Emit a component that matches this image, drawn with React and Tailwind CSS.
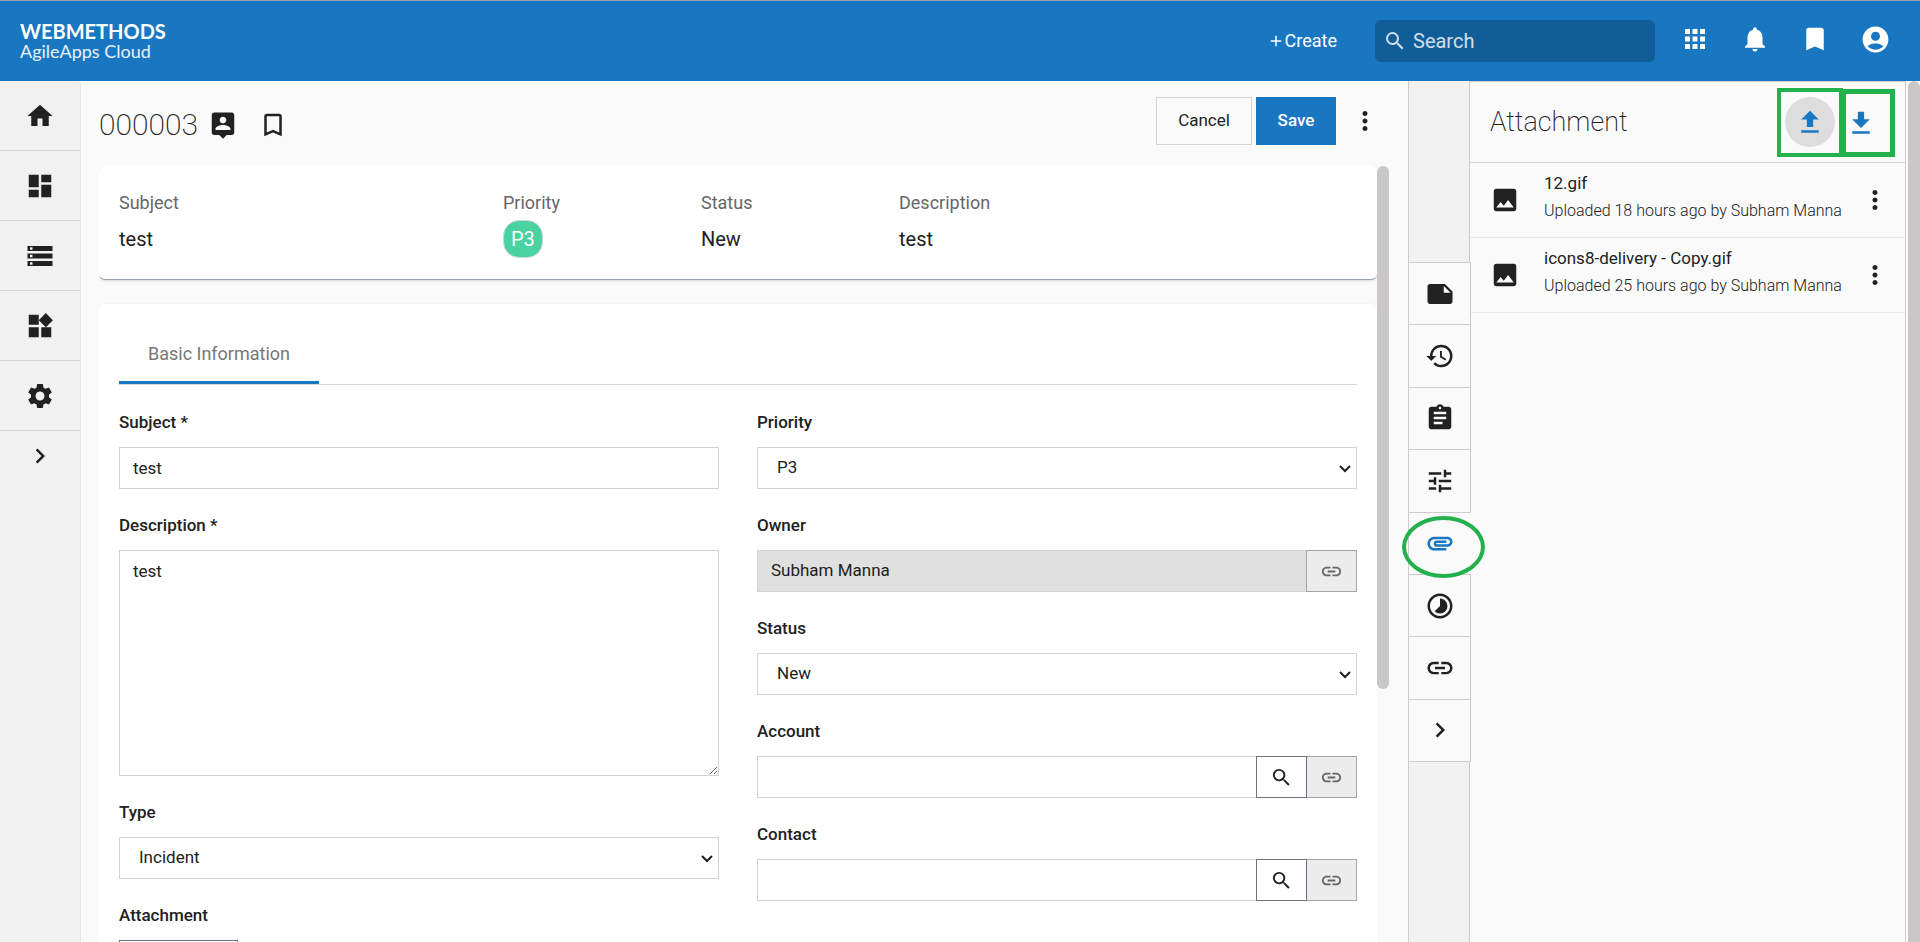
import React, { useState } from 'react'
import {
  MdAccountCircle,
  MdAdd,
  MdApps,
  MdAssignment,
  MdAttachment,
  MdBookmark,
  MdBookmarkBorder,
  MdChevronRight,
  MdDashboard,
  MdHistory,
  MdHome,
  MdImage,
  MdLink,
  MdMoreVert,
  MdNote,
  MdNotifications,
  MdSearch,
  MdSettings,
  MdStorage,
  MdTimelapse,
  MdTune,
  MdWidgets,
} from 'react-icons/md'

const leftNav = [
  { label: 'Home', Icon: MdHome },
  { label: 'Dashboard', Icon: MdDashboard },
  { label: 'Records', Icon: MdStorage },
  { label: 'Objects', Icon: MdWidgets },
  { label: 'Settings', Icon: MdSettings },
]

const panelTabs = [
  { label: 'Notes', Icon: MdNote },
  { label: 'History', Icon: MdHistory },
  { label: 'Tasks', Icon: MdAssignment },
  { label: 'Processes', Icon: MdTune },
  { label: 'Attachment', Icon: MdAttachment },
  { label: 'Time', Icon: MdTimelapse },
  { label: 'Related', Icon: MdLink },
  { label: 'Collapse', Icon: MdChevronRight },
]

const files = [
  { name: '12.gif', info: 'Uploaded 18 hours ago by Subham Manna' },
  { name: 'icons8-delivery - Copy.gif', info: 'Uploaded 25 hours ago by Subham Manna' },
]

const Header = () => {
  return (
    <header className="flex h-[81px] shrink-0 items-center border-t border-gray-400 bg-[#1976c1] pl-5 pr-[15px] text-white">
      <a href="#" className="flex flex-col font-[Lato,sans-serif]">
        <span className="text-xl leading-5 font-bold">WEBMETHODS</span>
        <span className="text-lg leading-5 text-white/90">AgileApps Cloud</span>
      </a>
      <button className="ml-auto flex items-center text-lg">
        <MdAdd className="size-[18px]" />
        Create
      </button>
      <label className="ml-[38px] flex h-[42px] w-[280px] items-center gap-1.5 rounded-md bg-[#115d98] pl-2">
        <MdSearch className="size-6 shrink-0 text-white/80" />
        <input
          aria-label="Search"
          placeholder="Search"
          className="w-full min-w-0 bg-transparent text-xl outline-none placeholder:text-white/80"
        />
      </label>
      <div className="ml-2.5 flex pb-1">
        <button aria-label="Applications" className="flex w-[60px] items-center justify-center"><MdApps className="size-[30px]" /></button>
        <button aria-label="Notifications" className="flex w-[60px] items-center justify-center"><MdNotifications className="size-[30px]" /></button>
        <button aria-label="Bookmarks" className="flex w-[60px] items-center justify-center"><MdBookmark className="size-[30px]" /></button>
        <button aria-label="Account" className="flex w-[60px] items-center justify-center"><MdAccountCircle className="size-[31px]" /></button>
      </div>
    </header>
  )
}

const Sidebar = () => {
  return (
    <nav className="w-[81px] shrink-0 rounded-tr border-r border-gray-200 bg-[#f1f1f1]">
      {leftNav.map(({ label, Icon }) => (
        <a key={label} href="#" aria-label={label} className="flex h-[70px] items-center justify-center border-b border-gray-300">
          <Icon className="size-[30px]" />
        </a>
      ))}
      <button aria-label="Expand menu" className="flex h-[50px] w-full items-center justify-center">
        <MdChevronRight className="size-[30px]" />
      </button>
    </nav>
  )
}

const Field = ({ id, label, children }) => {
  return (
    <div className="mb-[23px] flex flex-col">
      <label htmlFor={id} className="mb-3 text-[17px] leading-[26px] font-medium">{label}</label>
      {children}
    </div>
  )
}

const SelectField = ({ id, label, options }) => {
  return (
    <Field id={id} label={label}>
      <div className="relative">
        <select id={id} className="h-[42px] w-full appearance-none border border-[#ced4da] bg-white px-[19px] text-[17px]">
          {options.map((o) => <option key={o}>{o}</option>)}
        </select>
        <svg
          className="pointer-events-none absolute top-[18px] right-1.5 h-2 w-3"
          viewBox="0 0 12 8"
          fill="none"
          stroke="currentColor"
          strokeWidth="2"
        >
          <path d="M1 1l5 5 5-5" />
        </svg>
      </div>
    </Field>
  )
}

const LookupField = ({ id, label, value = '', locked = false }) => {
  return (
    <Field id={id} label={label}>
      <div className="flex h-[42px]">
        <input
          id={id}
          defaultValue={value}
          readOnly={locked}
          className={`min-w-0 flex-1 border border-r-0 border-[#ced4da] px-[13px] text-[17px] ${locked ? 'bg-[#e0e0e0]' : 'bg-white'}`}
        />
        {!locked && (
          <button type="button" aria-label={`Search ${label}`} className="flex w-[51px] items-center justify-center border border-[#6c757d]">
            <MdSearch className="size-[23px]" />
          </button>
        )}
        <button
          type="button"
          aria-label={`Open ${label}`}
          className={`flex items-center justify-center border border-[#a0a5aa] bg-[#ececec] text-[#666] ${locked ? 'w-[51px]' : 'w-[50px] border-l-0'}`}
        >
          <MdLink className="size-[23px]" />
        </button>
      </div>
    </Field>
  )
}

const SummaryItem = ({ label, children }) => {
  return (
    <div>
      <div className="text-lg leading-[26px] text-[#666]">{label}</div>
      <div className="mt-2 flex h-[30px] items-center text-xl">{children}</div>
    </div>
  )
}

const Record = () => {
  return (
    <main className="flex min-w-0 flex-1 flex-col pl-[18px]">
      <div className="mb-[5px] flex h-20 shrink-0 items-center pr-7">
        <div className="mt-2 flex items-center">
          <h1 className="text-[30px] leading-9 font-extralight">000003</h1>
          <button aria-label="Owner" className="ml-2.5">
            <svg className="size-[30px]" viewBox="0 0 24 24" fill="currentColor">
              <path d="M19 2H5c-1.11 0-2 .9-2 2v14c0 1.1.89 2 2 2h4l3 3 3-3h4c1.1 0 2-.9 2-2V4c0-1.1-.9-2-2-2zm-7 3.3c1.49 0 2.7 1.21 2.7 2.7 0 1.49-1.21 2.7-2.7 2.7-1.49 0-2.7-1.21-2.7-2.7 0-1.49 1.21-2.7 2.7-2.7zM18 16H6v-.9c0-2 4-3.1 6-3.1s6 1.1 6 3.1v.9z" />
            </svg>
          </button>
          <button aria-label="Bookmark" className="ml-5"><MdBookmarkBorder className="size-[30px]" /></button>
        </div>
        <button className="ml-auto h-12 w-24 border border-gray-300 text-[17px]">Cancel</button>
        <button className="ml-1 h-12 w-20 bg-[#1976c1] text-[17px] font-medium text-white">Save</button>
        <button aria-label="More actions" className="ml-3.5"><MdMoreVert className="size-[30px]" /></button>
      </div>

      <div className="flex min-h-0 flex-1 pr-[19px]">
        <div className="min-w-0 flex-1 overflow-hidden">
          <section className="grid h-[114px] grid-cols-[384fr_198fr_198fr_458fr] rounded-md border-b border-gray-400 bg-white px-5 pt-6 shadow-sm">
            <SummaryItem label="Subject">test</SummaryItem>
            <SummaryItem label="Priority">
              <span className="h-[38px] rounded-2xl border border-gray-300 bg-[#4ad2a0] px-[7px] leading-9 text-white">P3</span>
            </SummaryItem>
            <SummaryItem label="Status">New</SummaryItem>
            <SummaryItem label="Description">test</SummaryItem>
          </section>

          <section className="mt-[23px] rounded-md border-t border-gray-100 bg-white px-5 pt-5">
            <div className="flex border-b border-gray-300">
              <button className="h-[60px] w-[200px] border-b-3 border-[#1976c1] pt-0.5 text-lg text-[#777]">Basic Information</button>
            </div>
            <form className="mt-6 grid grid-cols-2 gap-x-[38px]">
              <div>
                <Field id="subject" label="Subject *">
                  <input id="subject" defaultValue="test" className="h-[42px] border border-[#ced4da] px-[13px] text-[17px]" />
                </Field>
                <Field id="description" label="Description *">
                  <textarea id="description" defaultValue="test" className="h-[226px] resize border border-[#ced4da] px-[13px] py-2 text-[17px]" />
                </Field>
                <SelectField id="type" label="Type" options={['Incident', 'Problem', 'Question']} />
                <Field id="attachment" label="Attachment">
                  <button id="attachment" type="button" className="h-[42px] w-[119px] border border-[#6c757d]" />
                </Field>
              </div>
              <div>
                <SelectField id="priority" label="Priority" options={['P3', 'P2', 'P1']} />
                <LookupField id="owner" label="Owner" value="Subham Manna" locked />
                <SelectField id="status" label="Status" options={['New', 'Open', 'Closed']} />
                <LookupField id="account" label="Account" />
                <LookupField id="contact" label="Contact" />
              </div>
            </form>
          </section>
        </div>
        {/* Scrollbar thumb */}
        <div className="h-[523px] w-3 rounded-full bg-[#c9c7c8]" />
      </div>
    </main>
  )
}

const PanelTabs = ({ active, onSelect }) => {
  return (
    <div className="z-10 -mr-px flex w-[63px] shrink-0 flex-col">
      <div className="mr-px h-[181px] border-x border-[#ccc] bg-[#f1f1f1]" />
      <div className="flex h-[500px] flex-col border-t border-[#ccc]">
        {panelTabs.map(({ label, Icon }) => (
          <button
            key={label}
            aria-label={label}
            onClick={() => onSelect(label)}
            className={`relative flex w-full flex-1 items-center justify-center border-b border-l border-[#ccc] bg-[#fafafa] ${
              label === active ? 'z-10 text-[#1976c1]' : 'border-r'
            }`}
          >
            <Icon className="size-[30px]" />
            {label === active && (
              <span className="absolute top-[3px] -left-[7px] h-[62px] w-[83px] rounded-[50%] border-4 border-[#22b14c]" />
            )}
          </button>
        ))}
      </div>
      <div className="mr-px flex-1 border-x border-[#ccc] bg-[#f1f1f1]" />
    </div>
  )
}

const AttachmentPanel = () => {
  return (
    <aside className="flex w-[450px] shrink-0">
      <div className="flex-1 border-t border-r border-[#ccc]">
        <div className="flex h-[81px] items-center justify-between border-b border-gray-300 pl-5 pr-2.5">
          <h2 className="text-[27px] font-extralight">Attachment</h2>
          <div className="flex items-end">
            <button aria-label="Upload" className="flex h-[69px] w-[66px] items-center justify-center border-4 border-[#22b14c] text-[#1976c1]">
              <span className="flex size-[50px] items-center justify-center rounded-full bg-[#ddd]">
                <svg className="size-[30px]" viewBox="0 0 24 24" fill="currentColor">
                  <path d="M9.5 16h5v-6h4.500l-7-7-7 7h4.500zM5 18.500h14v2H5z" />
                </svg>
              </span>
            </button>
            <button aria-label="Download" className="flex h-[68px] w-[52px] items-center justify-center border-5 border-l-3 border-[#22b14c] pr-3.5 text-[#1976c1]">
              <svg className="size-[30px] shrink-0" viewBox="0 0 24 24" fill="currentColor">
                <path d="M19 9h-4.500V3h-5v6H5l7 7zM5 18.500h14v2H5z" />
              </svg>
            </button>
          </div>
        </div>
        <ul>
          {files.map((file) => (
            <li key={file.name} className="flex h-[75px] items-center border-b border-gray-200 pl-5 pr-[15px]">
              <MdImage className="size-[30px] shrink-0" />
              <div className="ml-6 flex-1 pb-[3px] whitespace-nowrap">
                <a href="#" className="block text-[17px] leading-6">{file.name}</a>
                <p className="text-base leading-8 font-light">{file.info}</p>
              </div>
              <button aria-label={`Options for ${file.name}`}><MdMoreVert className="size-[30px]" /></button>
            </li>
          ))}
        </ul>
      </div>
      <div className="w-3.5 pl-0.5">
        <div className="h-full rounded-t-full bg-[#c9c7c8]" />
      </div>
    </aside>
  )
}

export default function App() {
  const [activeTab, setActiveTab] = useState('Attachment')

  return (
    <div className="flex h-screen flex-col overflow-hidden bg-[#fafafa] font-[Roboto,sans-serif] text-[#212121]">
      <Header />
      <div className="flex min-h-0 flex-1">
        <Sidebar />
        <Record />
        <PanelTabs active={activeTab} onSelect={setActiveTab} />
        <AttachmentPanel />
      </div>
    </div>
  )
}
